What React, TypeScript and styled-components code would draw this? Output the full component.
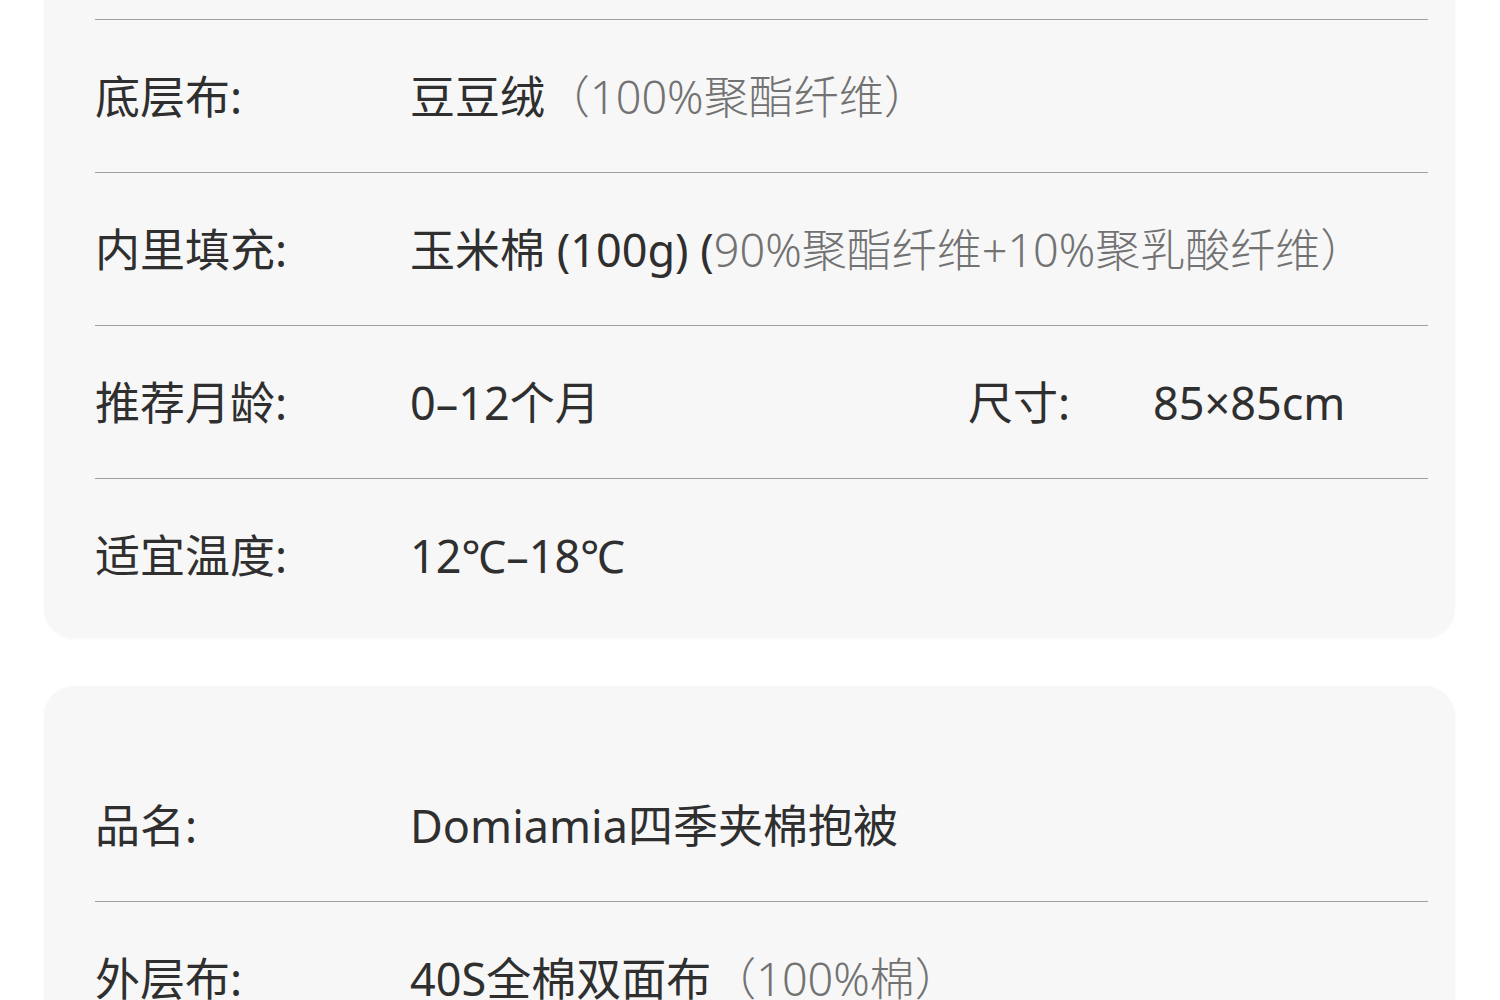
import React from "react"
import styled, { createGlobalStyle } from "styled-components"

const GlobalStyle = createGlobalStyle`
  html, body {
    margin: 0;
    padding: 0;
    background: #fff;
    overflow: hidden;
  }
  body {
    font-family: "Noto Sans", "Noto Sans CJK SC", sans-serif;
  }
`

const Page = styled.div`
  width: 1500px;
  height: 1000px;
  overflow: hidden;
  padding: 0 45px 0 44px;
  box-sizing: border-box;
  display: flex;
  flex-direction: column;
  gap: 48px;
`

const Card = styled.div<{ $top: number; $bottom: number; $shift?: number }>`
  background: #f7f7f7;
  border-radius: 30px;
  padding: ${p => p.$top}px 27px ${p => p.$bottom}px 51px;
  margin-top: ${p => p.$shift || 0}px;
  box-shadow: 0 1px 3px rgba(0, 0, 0, 0.03);
  flex-shrink: 0;
`

const Row = styled.div<{ $line?: boolean }>`
  display: flex;
  align-items: center;
  border-top: ${p => (p.$line ? "1px solid #a0a0a0" : "none")};
  box-sizing: border-box;
  height: ${p => (p.$line ? 153 : 152)}px;
`

const Label = styled.div<{ $w: number }>`
  width: ${p => p.$w}px;
  flex-shrink: 0;
  font-size: 45px;
  line-height: 1;
  color: #2f2f2f;
  white-space: nowrap;
`

const Value = styled.div<{ $w?: number }>`
  width: ${p => (p.$w ? `${p.$w}px` : "auto")};
  flex-shrink: 0;
  font-size: 45px;
  line-height: 1;
  color: #2f2f2f;
  white-space: nowrap;
`

const Note = styled.span`
  color: #727272;
  font-weight: 300;
`

export default function App() {
  return (
    <>
      <GlobalStyle />
      <Page>
        <Card $top={49} $bottom={7} $shift={-30}>
          <Row $line>
            <Label $w={315}>底层布:</Label>
            <Value>豆豆绒<Note>（100%聚酯纤维）</Note></Value>
          </Row>
          <Row $line>
            <Label $w={315}>内里填充:</Label>
            <Value>玉米棉 (100g) (<Note>90%聚酯纤维+10%聚乳酸纤维）</Note></Value>
          </Row>
          <Row $line>
            <Label $w={315}>推荐月龄:</Label>
            <Value $w={558}>0–12个月</Value>
            <Label $w={185}>尺寸:</Label>
            <Value>85×85cm</Value>
          </Row>
          <Row $line>
            <Label $w={315}>适宜温度:</Label>
            <Value>12℃–18℃</Value>
          </Row>
        </Card>
        <Card $top={63} $bottom={40}>
          <Row>
            <Label $w={315}>品名:</Label>
            <Value>Domiamia四季夹棉抱被</Value>
          </Row>
          <Row $line>
            <Label $w={315}>外层布:</Label>
            <Value>40S全棉双面布<Note>（100%棉）</Note></Value>
          </Row>
        </Card>
      </Page>
    </>
  )
}
